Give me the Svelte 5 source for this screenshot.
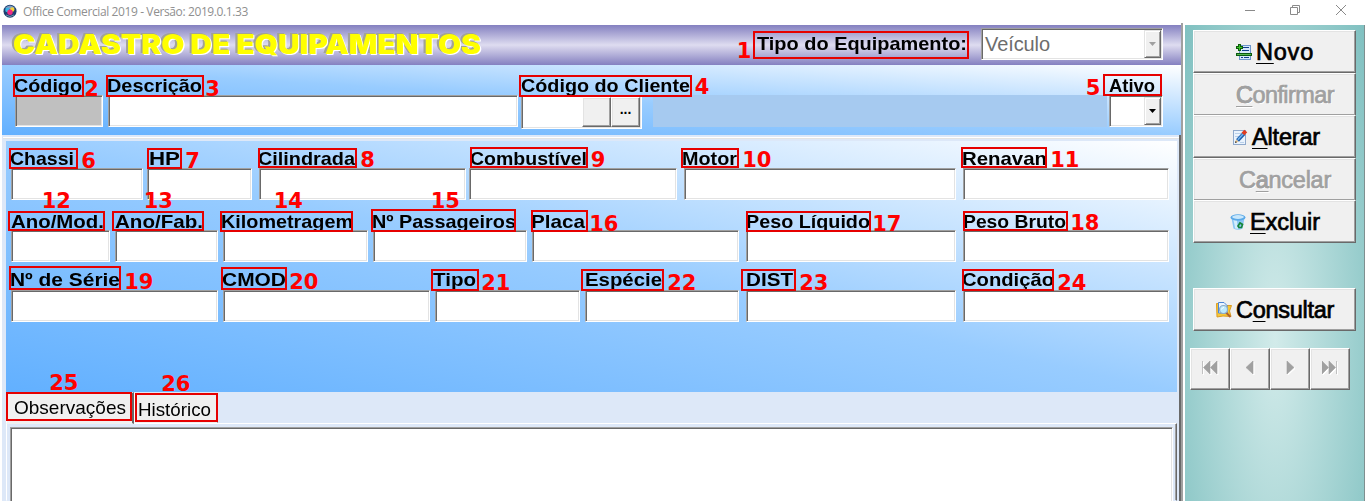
<script>
  // Spreads the letters so that the text takes the given width.
  function fit(node, width) {
    const natural = node.getBoundingClientRect().width;
    const n = node.textContent.length;
    node.style.letterSpacing = (width - natural) / n + 'px';
  }

  // Widens the glyphs themselves so that the text takes the given width.
  function stretch(node, width) {
    const natural = node.getBoundingClientRect().width;
    node.style.transformOrigin = '0 50%';
    node.style.transform = `scaleX(${width / natural})`;
    node.style.marginRight = width - natural + 'px';
  }

  // gap: space before the field, w: field width, dx: label inset, tw: label width
  const head = [
    { label: 'Código', gap: 0, w: 88, dx: -1, tw: 68, kind: 'off' },
    { label: 'Descrição', gap: 5, w: 410, dx: -1, tw: 95, kind: 'text' },
    { label: 'Código do Cliente', gap: 3, w: 121, dx: 0, tw: 169, kind: 'lookup' },
    { label: '', gap: 11, w: 454, dx: 0, tw: 0, kind: 'display' },
    { label: 'Ativo', gap: 2, w: 54, dx: 0, tw: 46, kind: 'combo' }
  ];
  const rows = [
    { top: 7, shift: 0.5, fields: [
      { label: 'Chassi', gap: 0, w: 132, dx: -1, tw: 64 },
      { label: 'HP', gap: 4, w: 105, dx: 2, tw: 31 },
      { label: 'Cilindrada', gap: 7, w: 207, dx: -1, tw: 97 },
      { label: 'Combustível', gap: 3, w: 208, dx: 1, tw: 117 },
      { label: 'Motor', gap: 7, w: 272, dx: -2, tw: 55 },
      { label: 'Renavan', gap: 7, w: 206, dx: -1, tw: 85 }
    ] },
    { top: 10, shift: 1.5, fields: [
      { label: 'Ano/Mod.', gap: 0, w: 99, dx: 0, tw: 93 },
      { label: 'Ano/Fab.', gap: 5, w: 103, dx: 0, tw: 88 },
      { label: 'Kilometragem', gap: 5, w: 145, dx: -2, tw: 132 },
      { label: 'Nº Passageiros', gap: 5, w: 154, dx: -1, tw: 144 },
      { label: 'Placa', gap: 5, w: 207, dx: -1, tw: 54 },
      { label: 'Peso Líquido', gap: 7, w: 210, dx: 0, tw: 124 },
      { label: 'Peso Bruto', gap: 7, w: 206, dx: 0, tw: 103 }
    ] },
    { top: 8, shift: -0.5, fields: [
      { label: 'Nº de Série', gap: 0, w: 207, dx: -1, tw: 110 },
      { label: 'CMOD', gap: 5, w: 207, dx: -1, tw: 64 },
      { label: 'Tipo', gap: 5, w: 145, dx: -2, tw: 43 },
      { label: 'Espécie', gap: 5, w: 154, dx: 0, tw: 77 },
      { label: 'DIST', gap: 7, w: 210, dx: 0, tw: 47 },
      { label: 'Condição', gap: 7, w: 206, dx: -1, tw: 92 }
    ] }
  ];

  // Callouts over the form: [number, box left, top, right, bottom, number left, number baseline]
  const notes = [
    [1, 753, 31, 969, 59, 737.5, 58], [2, 12.5, 73.5, 83.5, 96.5, 85, 96],
    [3, 105.5, 75, 204, 97, 206, 96], [4, 519, 75, 692, 97, 695.5, 94],
    [5, 1102.5, 73.5, 1161.5, 96, 1086.5, 95], [6, 9, 147.5, 77.5, 168.5, 82, 168],
    [7, 147, 148, 181.5, 168.5, 186, 168], [8, 257.5, 147.5, 357, 168, 361, 167],
    [9, 469.5, 147.3, 587.5, 168, 591.5, 167], [10, 680.5, 147.5, 739, 168, 743, 167],
    [11, 961.3, 147.3, 1047, 168, 1051, 167], [12, 8, 210.5, 105, 231, 42.5, 208],
    [13, 111.5, 210.5, 203.5, 231, 144.5, 208], [14, 220, 210.5, 353, 231.5, 274.5, 208],
    [15, 371.3, 209, 516.5, 232, 431.5, 208], [16, 530.5, 210, 588, 231.5, 590, 231],
    [17, 745.5, 210.5, 871, 232, 873, 231], [18, 962.5, 210.5, 1067.5, 231, 1071, 230],
    [19, 9, 266, 121, 290, 125, 289], [20, 220.5, 266.5, 286.5, 290, 290, 289],
    [21, 431, 269, 478.5, 291, 482, 290], [22, 581, 269, 664, 291, 668, 290],
    [23, 741, 268.5, 796, 290.5, 800, 290], [24, 961.5, 268.5, 1054, 291, 1058, 290],
    [25, 6, 392, 132, 421, 50, 390], [26, 134.5, 393, 218, 422, 162, 391]
  ];

  const actions = [
    { icon: 'add', pre: '', key: 'N', post: 'ovo', pad: 42, tw: 58 },
    { icon: '', pre: '', key: 'C', post: 'onfirmar', pad: 42, tw: 98, off: true },
    { icon: 'edit', pre: '', key: 'A', post: 'lterar', pad: 38, tw: 68 },
    { icon: '', pre: 'C', key: 'a', post: 'ncelar', pad: 45, tw: 92, off: true },
    { icon: 'bin', pre: '', key: 'E', post: 'xcluir', pad: 36, tw: 70 }
  ];
  const search = { icon: 'find', pre: 'C', key: 'o', post: 'nsultar', pad: 22, tw: 98 };

  const nav = [
    'M0.5 0V13M8 0L1.5 6.5L8 13ZM15 0L8.5 6.5L15 13Z',
    'M11 0L4 6.5L11 13Z',
    'M5 0L12 6.5L5 13Z',
    'M0 0L6.5 6.5L0 13ZM7 0L13.5 6.5L7 13ZM14.5 0V13'
  ];
</script>

{#snippet arrow(off)}
  <span class="drop" class:dim={off}>
    <svg width="7" height="4" viewBox="0 0 7 4"><path d="M0 0H7L3.5 4Z" fill="currentColor" /></svg>
  </span>
{/snippet}

{#snippet icon(name)}
  <svg class="ico" width="16" height="16" viewBox="0 0 16 16">
    {#if name === 'add'}
      <rect x="3.5" y="1.5" width="11" height="14" fill="#d6e8fb" stroke="#6d97cc" />
      <path d="M7 3.5H13M6 6.500H13M5 13.500H7M8 13.500H13" stroke="#12408c" />
      <rect x="0.500" y="9.500" width="15" height="2" fill="#56b64d" stroke="#0a5a12" />
      <path d="M3.500 0V7M0 3.500H7" stroke="#0b5c0b" stroke-width="3" />
      <path d="M3.500 1V6M1 3.500H6" stroke="#3fc12c" />
    {:else if name === 'edit'}
      <rect x="1.500" y="1.500" width="12" height="14" fill="#eaf3fd" stroke="#8fa9cc" />
      <path d="M3 4.500H9M3 7.500H7M8 13.500H12" stroke="#b9d0ea" />
      <path d="M5.500 11.500L12 4.500" stroke="#1f5fae" stroke-width="4" />
      <path d="M5.800 10.800L12 4" stroke="#70b4ee" stroke-width="1.500" />
      <path d="M3 14L4 10.500L6.500 12.800Z" fill="#e8c48a" />
      <path d="M3 14L3.600 12L5 13.200Z" fill="#222" />
      <path d="M11 5L13.800 2" stroke="#e03c20" stroke-width="4" />
    {:else if name === 'bin'}
      <path d="M1.500 4L3.500 14.500Q8 17 12.500 14.500L14.500 4Z" fill="#8cc6f4" />
      <path d="M3.500 6L5.200 14.500L8 15L6.800 6Z" fill="#d4edfd" />
      <ellipse cx="8" cy="3.500" rx="7.500" ry="3.200" fill="#5ba9e8" />
      <ellipse cx="8" cy="3" rx="5.800" ry="1.900" fill="#c9e7fb" />
      <path d="M8 12L10 9L12.500 10.500L11.500 13.500H9Z" fill="none" stroke="#16863a" stroke-width="1.700" />
    {:else if name === 'find'}
      <path d="M0.500 1.500H5L6 3.500L15.500 3.500L13.500 9L15 14.500L7 14L1 15Z" fill="#f7c736" stroke="#dc9c22" />
      <path d="M2.500 0.500H8L11 3.500V11H2.500Z" fill="#eaf4ff" stroke="#4a86d8" />
      <path d="M9.500 10L14.500 15" stroke="#b0622e" stroke-width="2" />
      <circle cx="7.500" cy="7.500" r="4" fill="#bdeafc" stroke="#8ba9c8" stroke-width="1.200" />
      <path d="M5.500 7.500Q6 5.500 8 5.500" fill="none" stroke="#fff" />
    {/if}
  </svg>
{/snippet}

{#snippet action(b)}
  <button class="act" class:off={b.off} style="padding-left:{b.pad}px">
    {#if b.icon}{@render icon(b.icon)}{/if}
    <span class="cap" use:fit={b.tw}>{b.pre}<u>{b.key}</u>{b.post}</span>
  </button>
{/snippet}

{#snippet field(f, shift)}
  <div class="field" style="width:{f.w}px;margin-left:{f.gap}px">
    <div class="label" style="padding-left:{Math.max(f.dx, 0)}px;margin-left:{Math.min(f.dx, 0)}px;line-height:{20 + shift * 2}px">
      {#if f.label}<span use:stretch={f.tw}>{f.label}</span>{/if}
    </div>
    {#if f.kind === 'lookup'}
      <div class="box lookup"><span></span><b class="mini"></b><b class="mini">...</b></div>
    {:else if f.kind === 'display'}
      <div class="display"></div>
    {:else if f.kind === 'combo'}
      <div class="box combo"><span></span>{@render arrow(false)}</div>
    {:else}
      <div class="box" class:grey={f.kind === 'off'}></div>
    {/if}
  </div>
{/snippet}

<div class="window">
  <header class="titlebar">
    <svg class="logo" width="14" height="14" viewBox="0 0 14 14">
      <circle cx="7" cy="7.200" r="6.500" fill="#1c3f70" />
      <path d="M2 4Q7-1 12 4L10 5H4Z" fill="#7d9cc4" />
      <circle cx="4.500" cy="6" r="2.300" fill="#35b6e6" />
      <circle cx="9.300" cy="5.500" r="2.200" fill="#f3d23b" />
      <circle cx="7" cy="8.300" r="2.700" fill="#ee2a86" />
      <path d="M3 11Q7 14 11 11" stroke="#6f8fae" fill="none" />
    </svg>
    <span class="apptitle" use:fit={225}>Office Comercial 2019 - Versão: 2019.0.1.33</span>
    <svg class="winbtns" width="102" height="12" viewBox="0 0 102 12" fill="none" stroke="#8a8a8a">
      <path d="M0 6.500H10M45.500 3.500H52.500V10.500H45.500ZM47.500 3.500V1.500H54.500V8.500H52.500M91 1L101 11M101 1L91 11" />
    </svg>
  </header>

  <div class="body">
    <main>
      <div class="band">
        <h1 use:stretch={468}>CADASTRO DE EQUIPAMENTOS</h1>
        <div class="kind">
          <span class="kindlabel" use:stretch={210}>Tipo do Equipamento:</span>
          <div class="box combo big"><span><em use:fit={65}>Veículo</em></span>{@render arrow(true)}</div>
        </div>
      </div>
      <section class="head">
        {#each head as f}{@render field(f, 0.5)}{/each}
      </section>
      <div class="frame">
        <section class="details">
          {#each rows as r}
            <div class="row" style="margin-top:{r.top}px">
              {#each r.fields as f}{@render field(f, r.shift)}{/each}
            </div>
          {/each}
        </section>
        <div class="tabs">
          <div class="tab active"><span use:stretch={112}>Observações</span></div>
          <div class="tab second"><span use:stretch={73}>Histórico</span></div>
        </div>
        <div class="page"><div class="memo"></div></div>
      </div>
    </main>
    <aside>
      <div class="stack">{#each actions as b}{@render action(b)}{/each}</div>
      <div class="stack lone">{@render action(search)}</div>
      <div class="nav">
        {#each nav as d}
          <button><svg width="17" height="15" viewBox="0 0 17 15">
            <path {d} transform="translate(1 1)" fill="#fff" stroke="#fff" />
            <path {d} fill="#a0a0a0" stroke="#a0a0a0" stroke-width=".6" />
          </svg></button>
        {/each}
      </div>
    </aside>
  </div>

  {#each notes as [n, l, t, r, b, nx, ny]}
    <div class="mark" style="left:{l}px;top:{t}px;width:{r - l}px;height:{b - t}px"></div>
    <div class="num" style="left:{nx - 0.8}px;top:{ny - 19.5}px">{n}</div>
  {/each}
</div>

<style>
  :global(body) { background: #fff; overflow: hidden; }
  * { box-sizing: border-box; }
  .window {
    position: relative; width: 1365px; height: 501px; overflow: hidden;
    display: flex; flex-direction: column;
    font-family: "Liberation Sans", Arial, sans-serif; color: #000; background: #fff;
  }
  .titlebar { height: 23px; flex: none; display: flex; align-items: flex-start; padding-left: 3px; }
  .logo { margin-top: 4px; }
  .apptitle { margin-left: 6px; font: 12px/23px "Open Sans", sans-serif; color: #8f8f8f; white-space: nowrap; }
  .winbtns { margin: 4px 18px 0 auto; }
  .body { flex: 1; display: flex; min-height: 0; }
  main {
    width: 1183px; flex: none; padding: 2px 0 0 2px; border-right: 2px solid #a0a0a0;
    display: flex; flex-direction: column;
  }
  .band {
    height: 40px; flex: none; display: flex; justify-content: space-between; padding: 0 18px 0 11px;
    background: linear-gradient(#8480c0, #dedcf0 50%, #8480c0);
  }
  h1 {
    margin: 0; align-self: flex-start; font: 900 27px/39px Inter, sans-serif; color: #ff0; white-space: nowrap;
    text-shadow: 1px 1px 0 #fff, -1px -1px 0 #a3a396, -2px -1px 0 #a3a396;
  }
  .kind { display: flex; padding-top: 3px; gap: 14px; }
  .kindlabel { font-weight: bold; font-size: 18.500px; line-height: 32px; white-space: nowrap; }
  .box {
    height: 32px; display: flex; background: #fff; border: 1px solid;
    border-color: #a0a0a0 #fff #fff #a0a0a0;
    box-shadow: inset 1px 1px 0 #696969, inset -1px -1px 0 #e3e3e3;
  }
  .grey { background: #c0c0c0; }
  .combo { padding: 1px; }
  .combo > span:first-child { flex: 1; }
  .big { width: 182px; color: #6d6d6d; font-size: 20px; line-height: 29px; padding-left: 3px; }
  em { font-style: normal; display: inline-block; }
  .drop {
    width: 17px; display: flex; align-items: center; justify-content: center; background: #f0f0f0; color: #000;
    border: 1px solid; border-color: #e3e3e3 #696969 #696969 #e3e3e3;
    box-shadow: inset 1px 1px 0 #fff, inset -1px -1px 0 #a0a0a0;
  }
  .dim { color: #a0a0a0; }
  .head {
    height: 70px; flex: none; display: flex; padding: 10px 0 0 13px;
    background: linear-gradient(to top right, #62b0ff, #98ccff 50%, #fff);
  }
  .field { flex: none; }
  .label { height: 20px; font-size: 18.500px; font-weight: bold; white-space: nowrap; }
  .label span, .tab span, .cap { display: inline-block; }
  .lookup { height: 34px; padding: 1px 1px 1px 0; }
  .lookup > span { flex: 1; }
  .mini {
    width: 29px; background: #f0f0f0; text-align: center; font-size: 14px; line-height: 22px;
    border: 1px solid; border-color: #fff #696969 #696969 #fff;
    box-shadow: inset -1px -1px 0 #a0a0a0, inset 1px 1px 0 #e3e3e3;
  }
  .display { height: 32px; background: #a6caf0; }
  .frame {
    flex: 1; min-height: 0; display: flex; flex-direction: column; background: #dde8f8;
    padding: 6px 2px 0 4px; border-right: 2px solid #696969;
    box-shadow: inset 1px 0 0 #dde8f8, inset 0 2px 0 #dde8f8, inset 0 3px 0 #fff, inset 0 4px 0 #e3e3e3;
  }
  .details {
    height: 251px; flex: none; padding-left: 5px;
    background: linear-gradient(to top right, #62b0ff, #98ccff 50%, #fff);
    display: flow-root;
  }
  .row { display: flex; height: 52px; }
  .tabs { height: 31px; flex: none; display: flex; align-items: flex-start; }
  .tab {
    background: #f0f0f0; border: 1px solid; border-color: #fff #696969 transparent #fff; font-size: 19px;
    white-space: nowrap;
  }
  .active { width: 128px; height: 32px; padding-left: 7px; line-height: 29px; border-right-width: 2px; z-index: 1; }
  .second { width: 84px; height: 30px; margin-top: 1px; padding-left: 3px; line-height: 31px; }
  .page {
    flex: 1; display: flex; padding: 3px 3px 0 3px; background: #dde8f8; border: 1px solid;
    border-color: #fff #696969 transparent #fff;
    box-shadow: inset -1px 0 0 #a0a0a0;
  }
  .memo {
    flex: 1; background: #fff; border: 1px solid; border-color: #a0a0a0 #fff #fff #a0a0a0; margin-bottom: -2px;
    box-shadow: inset 1px 1px 0 #696969, inset -1px 0 0 #e3e3e3;
  }
  aside {
    flex: 1; margin-top: 2px; margin-left: 2px; padding: 5px 8px 0; border-right: 1px solid #7f8f8f;
    background: radial-gradient(ellipse 125px 460px at 90px 315px, #d2ebea, #7fc0c0);
  }
  .stack { display: flex; flex-direction: column; width: 163px; }
  .lone { margin-top: 45px; }
  button {
    background: #f0f0f0; font-family: inherit; color: #000; border: 1px solid;
    border-color: #fff #696969 #696969 #fff;
    box-shadow: inset -1px -1px 0 #a0a0a0, inset 1px 1px 0 #e3e3e3;
  }
  .act {
    height: 43px; margin: 0 0 -0.400px; padding: 0; display: flex; align-items: center; gap: 4px;
    font-size: 23.500px; line-height: 43px; white-space: nowrap; -webkit-text-stroke: 0.700px currentColor;
  }
  .ico { flex: none; margin-top: 1px; }
  .cap { padding-top: 2px; }
  u { text-underline-offset: 3px; text-decoration-thickness: 1px; }
  .off { color: #a0a0a0; text-shadow: 1px 1px 0 #fff; }
  .nav { display: flex; margin: 17px 0 0 -3px; }
  .nav button { width: 40px; height: 42px; padding: 0; display: flex; align-items: center; justify-content: center; }
  .mark { position: absolute; z-index: 2; border: 2px solid #e60000; }
  .num { position: absolute; z-index: 2; font: bold 21px/25px "DejaVu Sans", sans-serif; color: #f00; white-space: nowrap; }
</style>
